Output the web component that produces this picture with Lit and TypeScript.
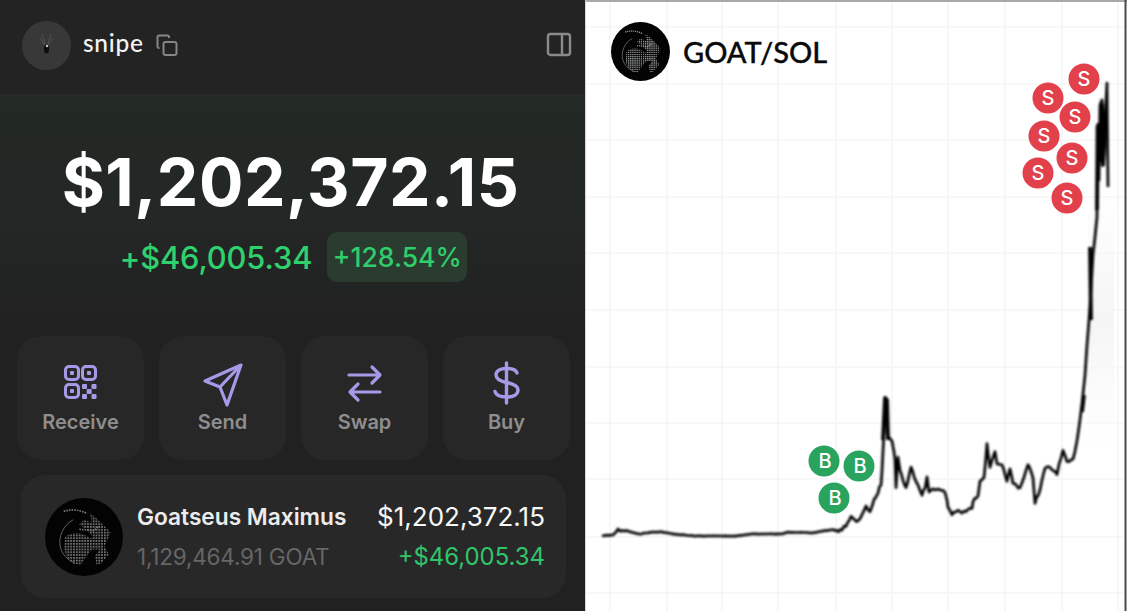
import { LitElement, html, css, svg } from "lit";
import { customElement } from "lit/decorators.js";

const logo = (id: string, grid: string) => html`<svg class="logo-svg" viewBox="0 0 100 100" aria-hidden="true">
  <defs>
    <pattern id=${id} width="3.6" height="3.6" patternUnits="userSpaceOnUse">
      <rect width="2.2" height="2.2" fill=${grid}></rect>
    </pattern>
  </defs>
  <circle cx="50" cy="50" r="50" fill="#030303"></circle>
  <path d="M26 50 C36 42 48 44 58 52 L62 50 L50 38 L44 34 L50 28 L60 32 L58 20 L66 26 L78 38 L84 44 L80 54 L76 62 L82 72 L72 84 L66 86 L64 74 L70 66 L60 66 L52 76 L46 86 L36 84 L28 76 L24 64 Z" fill="url(#${id})"></path>
  <path d="M36 28 C24 34 16 50 20 64 C23 74 30 80 38 83" fill="none" stroke=${grid} stroke-width="1"></path>
  <path d="M24 17 C34 14 44 15 54 20" fill="none" stroke=${grid} stroke-width="2.200" stroke-dasharray="2 1.400"></path>
  <path d="M44 40 L62 42 L70 36" fill="none" stroke=${grid} stroke-width="2" stroke-dasharray="2 1.400"></path>
</svg>`;

const anchors: [number, number][] = [[602,535.7],[613,535],[616,532],[618,529],[620,531],[622,530.5],[628,531],[634,533],[640,534],[652,532],[662,532],[673,534],[695,536],[735,536],[752,534],[782,534],[788,532],[812,533],[823,531],[835,529.5],[840,531],[846,525],[851,517],[855,521],[858,522],[862,514],[866,506],[868,511],[870,513],[872,505],[878,492],[881,484],[882,470],[884,430],[885,405],[886,397],[887,410],[888,437],[890,438],[892,440],[894,452],[895,460],[896,488],[898,456],[900,470],[903,480],[906,488],[911,468],[916,480],[922,494],[925,488],[927,478],[929,492],[933,488],[945,492],[947,500],[948,507],[952,514],[956,511],[962,513],[972,508],[973,502],[978,495],[980,480],[984,477],[987,445],[990,467],[993,456],[995,453],[997,465],[1002,466],[1007,480],[1010,470],[1013,483],[1020,488],[1028,465],[1033,477],[1035,502],[1040,490],[1045,468],[1050,468],[1057,473],[1063,451],[1067,463],[1073,460],[1077,440],[1080,420],[1082,403],[1085,375],[1087,345],[1089,320],[1091,290],[1093,255],[1095,237],[1097,217]];
const tail = "1097,217 1097,127 1099,180 1100,105 1102,100 1103,165 1105,120 1107,83 1108,187";

function jitterLine(): string {
  const out: string[] = [];
  let seed = 7;
  const rnd = () => { seed = (seed * 16807) % 2147483647; return seed / 2147483647 - 0.5; };
  for (let i = 0; i < anchors.length - 1; i++) {
    const [x0, y0] = anchors[i];
    const [x1, y1] = anchors[i + 1];
    const steps = Math.max(1, Math.round((x1 - x0) / 2));
    for (let s = 0; s < steps; s++) {
      const t = s / steps;
      const amp = x0 < 835 ? 0.5 : x0 < 1078 ? 3 : 1;
      out.push(`${(x0 + (x1 - x0) * t).toFixed(1)},${(y0 + (y1 - y0) * t + rnd() * amp).toFixed(1)}`);
    }
  }
  return out.join(" ") + " " + tail;
}
const main = jitterLine();
const thick = ["883,440 885,398 887,400 888,440", "1082,412 1084,395", "1090,247 1091,320", "1097,210 1098,125 1100,160 1102,105 1103,165 1106,115"];

const vLines = [610, 667, 722, 778, 836, 892, 948, 1005, 1062, 1118];
const hLines = [27, 84, 140, 197, 253, 310, 367, 423, 479, 537, 593];
const sells: [number, number][] = [[1084, 79], [1048, 98], [1075, 117], [1044, 136], [1072, 158], [1038, 173], [1067, 198]];
const buys: [number, number][] = [[824, 461], [859, 466], [834, 498]];

@customElement("app-root")
export class AppRoot extends LitElement {
  static styles = css`
    :host { display: block; width: 1127px; height: 611px; overflow: hidden; font-family: Inter, "Liberation Sans", sans-serif; }
    .page { display: flex; width: 1127px; height: 611px; }
    .wallet { width: 585px; flex: none; display: flex; flex-direction: column; background: #212121; }
    .top { height: 96px; box-sizing: border-box; display: flex; align-items: center; padding: 0 13px 4px 22px; background: #232323; border-bottom: 2px solid #2a2c2a; }
    .avatar { width: 49px; height: 49px; border-radius: 50%; background: #393939; display: block; }
    .name { margin-left: 12px; color: #f4f4f4; font: 500 24.5px Lato, Inter, sans-serif; letter-spacing: .7px; padding-bottom: 5px; }
    .copy { margin-left: 12px; width: 22px; height: 22px; color: #868686; }
    .side { margin-left: auto; width: 26px; height: 26px; color: #8a8a8a; padding-bottom: 3px; }
    .hero { height: 238px; flex: none; box-sizing: border-box; padding-top: 47px; display: flex; flex-direction: column; align-items: center; background: linear-gradient(#232925, #232725 50%, #212121); }
    .balance { color: #fff; font-size: 66px; line-height: 78px; font-weight: 700; letter-spacing: .5px; margin-right: 4px; }
    .change { display: flex; align-items: center; gap: 15px; margin-top: 11px; margin-left: 2px; color: #2fd16e; font-weight: 500; }
    .amount { font-size: 30.8px; letter-spacing: -.1px; }
    .pill { height: 50px; box-sizing: border-box; padding: 0 5.500px; display: flex; align-items: center; background: #2a3c30; border-radius: 10px; font-size: 26.500px; color: #31cd6c; }
    .actions { display: grid; grid-template-columns: repeat(4, 127px); gap: 15px; padding: 2px 0 0 17px; }
    .action { height: 124px; background: #272727; border-radius: 24px; display: flex; flex-direction: column; align-items: center; color: #8e8e8e; font-size: 20px; font-weight: 600; }
    .icon { height: 48px; width: 48px; margin-top: 24px; color: #a899e8; }
    .action span { margin-top: 1px; line-height: 26px; }
    .asset { margin: 15px 19px 0 21px; height: 123px; box-sizing: border-box; padding: 0 21px 0 24px; background: #282828; border-radius: 24px; display: flex; align-items: center; }
    .asset-logo { width: 78px; height: 78px; flex: none; }
    .logo-svg { display: block; width: 100%; height: 100%; }
    .asset-body { flex: 1; margin-left: 14px; display: grid; grid-template-columns: 1fr auto; row-gap: 10px; }
    .t1 { color: #ececec; font-size: 22.7px; font-weight: 600; line-height: 30px; }
    .t2 { color: #f7f7f7; font-size: 26px; line-height: 30px; text-align: right; }
    .t3 { color: #666; font-size: 22.5px; line-height: 30px; letter-spacing: -.2px; }
    .t4 { color: #30c56b; font-size: 23.9px; line-height: 30px; text-align: right; }
    .chart { position: relative; flex: 1; background: #fff; overflow: hidden; }
    .plot { position: absolute; left: 0; top: 0; display: block; }
    .pair { position: absolute; left: 26px; top: 22px; display: flex; align-items: center; gap: 13px; color: #0a0a0a; font: 500 29px Lato, sans-serif; -webkit-text-stroke: .35px #0a0a0a; }
    .pair-logo { width: 59px; height: 59px; }
    .mark { font: 500 20px Inter, sans-serif; fill: #fff; text-anchor: middle; }
  `;

  render() {
    return html`<div class="page">
      <section class="wallet">
        <header class="top">
          <svg class="avatar" viewBox="0 0 49 49" aria-hidden="true">
            <circle cx="24.5" cy="24.5" r="24.5" fill="#383838"></circle>
            <path d="M20 13l3 10M29 13l-3 10M18 17l5 7M31 17l-5 7" stroke="#5c5c5c" stroke-width=".7" fill="none"></path>
            <ellipse cx="24.5" cy="28" rx="2.6" ry="4.6" fill="#0e0e0e"></ellipse>
            <circle cx="25" cy="25" r="1.2" fill="#c9c9c9"></circle>
          </svg>
          <span class="name">snipe</span>
          <svg class="copy" viewBox="0 0 22 22" fill="none" stroke="currentColor" stroke-width="2" aria-hidden="true">
            <rect x="7.500" y="8" width="13" height="13" rx="2"></rect>
            <path d="M3.500 14H3a1.500 1.500 0 0 1-1.500-1.500V3A1.500 1.500 0 0 1 3 1.500h8.500A1.500 1.500 0 0 1 13 3v1"></path>
          </svg>
          <svg class="side" viewBox="0 0 26 26" fill="none" stroke="currentColor" stroke-width="2.400" aria-hidden="true">
            <rect x="2" y="3" width="22" height="21" rx="2.500"></rect><path d="M16 3v21"></path>
          </svg>
        </header>
        <div class="hero">
          <div class="balance">$1,202,372.15</div>
          <div class="change"><span class="amount">+$46,005.34</span><span class="pill">+128.54%</span></div>
        </div>
        <div class="actions">
          <div class="action">
            <svg class="icon" viewBox="0 0 48 48" fill="none" stroke="currentColor" stroke-width="3" aria-hidden="true">
              <rect x="8.500" y="6.500" width="13" height="13" rx="3.500"></rect><rect x="25.500" y="6.500" width="13" height="13" rx="3.500"></rect><rect x="8.500" y="24.500" width="13" height="13" rx="3.500"></rect>
              <rect x="13" y="11" width="4" height="4" rx="1" fill="currentColor" stroke="none"></rect><rect x="30" y="11" width="4" height="4" rx="1" fill="currentColor" stroke="none"></rect><rect x="13" y="29" width="4" height="4" rx="1" fill="currentColor" stroke="none"></rect>
              <g fill="currentColor" stroke="none"><rect x="25" y="24" width="5" height="5" rx="1"></rect><rect x="34.500" y="24" width="5" height="5" rx="1"></rect><rect x="29.700" y="29" width="5" height="5" rx="1"></rect><rect x="25" y="34" width="5" height="5" rx="1"></rect><rect x="34.500" y="34" width="5" height="5" rx="1"></rect></g>
            </svg>
            <span>Receive</span>
          </div>
          <div class="action">
            <svg class="icon" viewBox="0 0 48 48" fill="none" stroke="currentColor" stroke-width="3.200" stroke-linejoin="round" stroke-linecap="round" aria-hidden="true">
              <path d="M42 5 6 21l15 6 7 18Z"></path><path d="M21 27 41 6"></path>
            </svg>
            <span>Send</span>
          </div>
          <div class="action">
            <svg class="icon" viewBox="0 0 48 48" fill="none" stroke="currentColor" stroke-width="3.200" stroke-linecap="round" stroke-linejoin="round" aria-hidden="true">
              <path d="M8 15h30M31 7l8 8-8 8"></path><path d="M39 32H10M17 24l-8 8 8 8"></path>
            </svg>
            <span>Swap</span>
          </div>
          <div class="action">
            <svg class="icon" viewBox="0 0 48 48" fill="none" stroke="currentColor" stroke-width="3.400" stroke-linecap="round" aria-hidden="true">
              <path d="M23.500 3v40"></path><path d="M34 13c-1-3-4.500-4.500-10.500-4.500-6.500 0-10.500 2.500-10.500 6.500s4 6 10.500 7.500 11.500 3 11.500 7.500-4.500 7-11.500 7-10.500-2-11.500-5.500"></path>
            </svg>
            <span>Buy</span>
          </div>
        </div>
        <div class="asset">
          <div class="asset-logo">${logo("gridA", "#7b7f7b")}</div>
          <div class="asset-body">
            <div class="t1">Goatseus Maximus</div><div class="t2">$1,202,372.15</div>
            <div class="t3">1,129,464.91 GOAT</div><div class="t4">+$46,005.34</div>
          </div>
        </div>
      </section>
      <section class="chart">
        <svg class="plot" width="542" height="611" viewBox="585 0 542 611" aria-hidden="true">
          <defs>
            <linearGradient id="fade" x1="0" y1="0" x2="0" y2="1"><stop offset="0" stop-color="#f6f6f6" stop-opacity="0"></stop><stop offset=".5" stop-color="#f5f5f5"></stop><stop offset="1" stop-color="#f8f8f8" stop-opacity="0"></stop></linearGradient>
            <filter id="soft" x="-5%" y="-5%" width="110%" height="110%"><feGaussianBlur stdDeviation=".8"></feGaussianBlur></filter>
          </defs>
          <rect x="1088" y="190" width="26" height="260" fill="url(#fade)"></rect>
          ${vLines.map((x) => svg`<path d="M${x} 0V611" stroke="#f5f5f5" stroke-width="1.500"></path>`)}
          ${hLines.map((y) => svg`<path d="M585 ${y}H1127" stroke="#f6f6f6" stroke-width="1.500"></path>`)}
          <path d="M585 1H1127" stroke="#a9a9a9" stroke-width="2"></path>
          <path d="M585.500 0V611" stroke="#d6d6d6"></path>
          <path d="M1125.500 0V611" stroke="#4a4a4a" stroke-width="2"></path>
          <g filter="url(#soft)" fill="none" stroke="#050505" stroke-linejoin="round">
            <polyline points=${main} stroke-width="2.700"></polyline>
            ${thick.map((p) => svg`<polyline points=${p} stroke-width="3.800"></polyline>`)}
          </g>
          ${sells.map(([x, y]) => svg`<circle cx=${x} cy=${y} r="15.500" fill="#e2404a"></circle><text class="mark" x=${x} y=${y + 7}>S</text>`)}
          ${buys.map(([x, y]) => svg`<circle cx=${x} cy=${y} r="15.500" fill="#2aa35f"></circle><text class="mark" x=${x + 1} y=${y + 7}>B</text>`)}
        </svg>
        <div class="pair"><div class="pair-logo">${logo("gridB", "#969a96")}</div><span>GOAT/SOL</span></div>
      </section>
    </div>`;
  }
}
